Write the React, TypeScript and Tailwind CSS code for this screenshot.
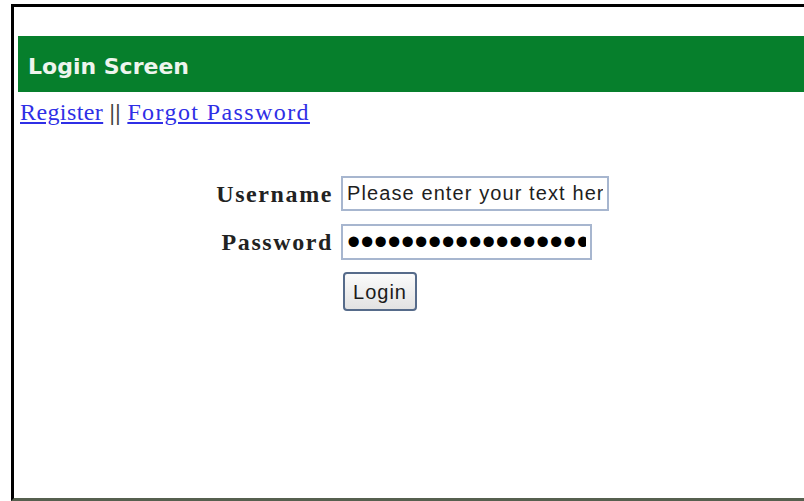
import React, { useState } from 'react';

const LoginScreen: React.FC = () => {
  const [form, setForm] = useState({
    username: 'Please enter your text here',
    password: 'secretpassword12345',
  });

  const handleChange = (e: React.ChangeEvent<HTMLInputElement>) => {
    setForm({
      ...form,
      [e.target.name]: e.target.value,
    });
  };

  const handleSubmit = (e: React.FormEvent) => {
    e.preventDefault();
    // Handle login logic here
  };

  return (
    <div className="h-[501px] w-full overflow-hidden bg-white pl-[11px] pt-[4px]">
      <div className="h-[497px] w-[796px] border-l-[3px] border-t-[3px] border-b-[3px] border-l-black border-t-black border-b-[#56604f] pl-[4px] pt-[29px]">
        <div className="flex h-[56px] items-center bg-[#067f2c] pl-[10px] pt-[4px]">
          <span className="font-['DejaVu_Sans',sans-serif] text-[22px] font-bold text-[#eef5ee]">
            Login Screen
          </span>
        </div>

        <div className="mt-[2px] font-['Liberation_Serif',serif] text-[24px] tracking-[0.4px] text-[#444]">
          <a href="#" className="pl-[2px] text-[#2f2fe6] underline">
            Register
          </a>{' '}
          <span className="font-bold">||</span>{' '}
          <a href="#" className="tracking-[1.4px] text-[#2f2fe6] underline">
            Forgot Password
          </a>
        </div>

        <form
          onSubmit={handleSubmit}
          className="mt-[46px] grid grid-cols-[117px_268px] justify-center gap-x-[8px] gap-y-[12px]"
        >
          <label className="flex items-center justify-end font-['Liberation_Serif',serif] text-[24px] font-bold tracking-[1.6px] text-[#222]">
            Username
          </label>
          <input
            type="text"
            name="username"
            value={form.username}
            onChange={handleChange}
            className="h-[35px] w-[268px] border-2 border-[#a7b6cf] bg-white px-[4px] font-['Liberation_Sans',sans-serif] text-[20px] tracking-[1.1px] text-[#1e1e1e] outline-none"
          />

          <label className="flex items-center justify-end font-['Liberation_Serif',serif] text-[24px] font-bold tracking-[1.6px] text-[#222]">
            Password
          </label>
          <input
            type="password"
            name="password"
            value={form.password}
            onChange={handleChange}
            className="h-[36px] w-[251px] border-2 border-[#a7b6cf] bg-white px-[4px] font-['Liberation_Sans',sans-serif] text-[38px] leading-none tracking-[0.2px] text-black outline-none"
          />

          <div />
          <div className="pl-[2px]">
            <button
              type="submit"
              className="h-[39px] w-[74px] rounded-[4px] border-2 border-[#566b8a] bg-gradient-to-b from-[#fbfbfb] to-[#e2e2e2] font-['Liberation_Sans',sans-serif] text-[20px] tracking-[1px] text-[#1a1a1a]"
            >
              Login
            </button>
          </div>
        </form>
      </div>
    </div>
  );
};

export default function App() {
  return <LoginScreen />;
}
